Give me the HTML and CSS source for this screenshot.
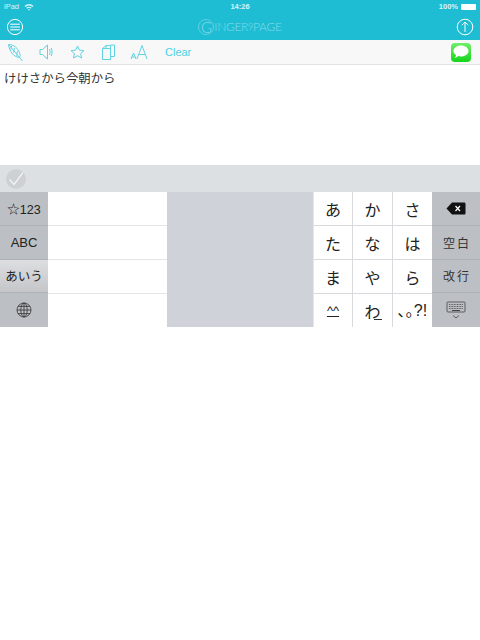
FILE: index.html
```html
<!DOCTYPE html>
<html lang="ja">

	<head>
		<meta charset="UTF-8">
		<title>Ginger Page</title>
		<link rel="stylesheet" href="styles.css">
	</head>

	<body>
		<header class="top">
			<div class="status">
				<span class="carrier">iPad
					<svg class="wifi" width="10" height="8" viewBox="0 0 10 8"><path d="M0.5 3A6.2 6.2 0 0 1 9.5 3L8.5 4A4.8 4.8 0 0 0 1.5 4ZM2.3 4.8A3.7 3.7 0 0 1 7.7 4.8L6.7 5.8A2.3 2.3 0 0 0 3.3 5.8ZM4 6.6A1.4 1.4 0 0 1 6 6.6L5 7.8Z" fill="#d4f3f8"/></svg>
				</span>
				<span class="clock">14:26</span>
				<span class="power">100%<i class="battery"></i></span>
			</div>
			<div class="nav">
				<svg width="18" height="18" viewBox="0 0 18 18" fill="none" stroke="#fff"><circle cx="9" cy="9" r="7.6"/><path d="M4.2 6.2H13.8M4.2 9H13.8M4.2 11.8H13.8"/></svg>
				<div class="logo">
					<span class="logo-g">G</span><span>INGER</span><span class="logo-small">9</span><span>PAGE</span>
				</div>
				<svg width="18" height="18" viewBox="0 0 18 18" fill="none" stroke="#fff"><circle cx="9" cy="9" r="7.8"/><path d="M9 14V4M5.8 7.2L9 4L12.2 7.2"/></svg>
			</div>
		</header>

		<div class="tools">
			<svg class="tool" width="16" height="19" viewBox="0 0 16 19"><path d="M1 1.5C6 1.5 11 5 12.5 11.5C12.8 13 12.5 14 11.5 14.3C6.5 14 2 9 1 1.5ZM1.5 2L15 18M4 3L3.5 6.5M7 5L6 9.5M10 8L9 12.5"/></svg>
			<svg class="tool" width="14" height="16" viewBox="0 0 14 16"><path d="M0.5 5.5V10.5H3L8 15V1L3 5.5ZM10 5C10.8 7 10.8 9 10 11M11.8 4C12.8 6.5 12.8 9.5 11.8 12"/></svg>
			<svg class="tool" width="15" height="14" viewBox="0 0 15 14"><path d="M7.5 1L9.4 5.1L14 5.6L10.6 8.6L11.6 13L7.5 10.7L3.4 13L4.4 8.6L1 5.6L5.6 5.1Z"/></svg>
			<svg class="tool" width="13" height="16" viewBox="0 0 13 16"><path d="M0.5 4.5L4 1.5V4.5ZM0.5 4.5V15.5H8.5V4.5H4M4 1.5H8.5V4.5M8.5 1H12.5V12.5H8.5"/></svg>
			<svg class="tool" width="18" height="15" viewBox="0 0 18 15"><path d="M0.5 14L3 8L5.5 14M1.3 12H4.7M6.5 14L11.5 0.5L16.5 14M8.2 9.5H14.8"/></svg>
			<span class="clear">Clear</span>
			<span class="msg">
				<svg width="16" height="14" viewBox="0 0 16 14"><path d="M8 0.5C12.1 0.5 15.5 2.9 15.5 6C15.5 9.1 12.1 11.5 8 11.5C7 11.5 6 11.4 5.2 11.1C4.2 12.2 2.8 12.9 1.5 13C2.3 12.2 2.9 11.1 3 9.9C1.4 8.9 0.5 7.5 0.5 6C0.5 2.9 3.9 0.5 8 0.5Z" fill="#fff"/></svg>
			</span>
		</div>

		<div class="note">けけさから今朝から</div>

		<div class="suggest">
			<span class="done">
				<svg width="20" height="20" viewBox="0 0 20 20" fill="none" stroke="#fff" stroke-width="1.1"><path d="M3.5 10.5L8 15.5L17 3.5"/></svg>
			</span>
		</div>

		<div class="keyboard">
			<div class="side left">
				<div class="key">☆123</div>
				<div class="key abc">ABC</div>
				<div class="key kana">あいう</div>
				<div class="key">
					<svg width="16" height="16" viewBox="0 0 16 16" fill="none" stroke="#333" stroke-width="0.8"><circle cx="8" cy="8" r="7"/><ellipse cx="8" cy="8" rx="3.2" ry="7"/><path d="M8 1V15M1 8H15M2 4.4H14M2 11.6H14"/></svg>
				</div>
			</div>
			<div class="candidates">
				<div></div><div></div><div></div><div></div>
			</div>
			<div class="gap"></div>
			<div class="keys">
				<div>あ</div><div>か</div><div>さ</div>
				<div>た</div><div>な</div><div>は</div>
				<div>ま</div><div>や</div><div>ら</div>
				<div class="face">^^</div><div class="wa">わ</div><div class="punct">､｡?!</div>
			</div>
			<div class="side right">
				<div class="key">
					<svg width="20" height="13" viewBox="0 0 20 13"><path d="M6 0.5H18C19 0.5 19.5 1 19.5 2V11C19.5 12 19 12.5 18 12.5H6L0.5 6.5Z" fill="#111"/><path d="M9.5 4L14 9M14 4L9.5 9" stroke="#fff" stroke-width="1.2"/></svg>
				</div>
				<div class="key word">空白</div>
				<div class="key word">改行</div>
				<div class="key">
					<svg width="20" height="19" viewBox="0 0 20 19" fill="none" stroke="#444" stroke-width="0.8"><rect x="1" y="1" width="18" height="10" rx="1"/><path d="M3 3.5H17M3 5.5H17M3 7.5H17" stroke-dasharray="1 0.6"/><path d="M6 9.5H14" stroke-width="1"/><path d="M7 14.5L10 17L13 14.5"/></svg>
				</div>
			</div>
		</div>
	</body>

</html>
```

FILE: styles.css
```css
* {
	margin: 0;
	padding: 0;
	box-sizing: border-box;
}

body {
	background: #fff;
	font-family: "Liberation Sans", "Noto Sans CJK JP", sans-serif;
	color: #222;
}

.top {
	height: 40px;
	background: #1fbdd4;
	color: #fff;
}

.status {
	height: 13px;
	padding: 1px 4px 0 4px;
	display: grid;
	grid-template-columns: 1fr auto 1fr;
	align-items: center;
	font-size: 7.5px;
	line-height: 12px;
	color: #d9f4f8;
}

.carrier {
	display: flex;
	align-items: center;
	gap: 5px;
}

.clock {
	font-weight: bold;
}

.power {
	display: flex;
	justify-content: flex-end;
	align-items: center;
	gap: 3px;
	font-weight: bold;
}

.battery {
	width: 15px;
	height: 6px;
	background: #fff;
	border-radius: 1px;
}

.nav {
	height: 27px;
	padding: 0 6px;
	display: flex;
	justify-content: space-between;
	align-items: center;
}

.logo {
	display: flex;
	align-items: center;
	height: 20px;
	font-family: Lato, "Liberation Sans", sans-serif;
	font-weight: 300;
	font-size: 12px;
	color: #83dbe8;
	letter-spacing: -0.3px;
}

.logo-g {
	width: 16px;
	height: 16px;
	border: 1px solid #5fcfe0;
	border-radius: 50%;
	display: flex;
	align-items: center;
	justify-content: center;
	font-size: 15px;
}

.logo-small {
	font-size: 9px;
}

.tools {
	height: 25px;
	background: #f8f8f8;
	border-bottom: 1px solid #e3e3e3;
	display: flex;
	align-items: center;
	padding-right: 9px;
}

.tool {
	width: 31px;
	fill: none;
	stroke: #5fd3e4;
	stroke-width: 1;
}

.clear {
	font-size: 11px;
	color: #4cd0e2;
	margin-left: 10px;
}

.msg {
	margin-left: auto;
	width: 20px;
	height: 19px;
	border-radius: 4px;
	background: linear-gradient(#6fee6a, #14d51c);
	display: flex;
	align-items: center;
	justify-content: center;
}

.note {
	height: 100px;
	padding: 5px 4px 0;
	font-size: 12.4px;
	line-height: 18px;
	color: #333;
}

.suggest {
	height: 27px;
	background: #dde0e3;
	display: flex;
	align-items: center;
	padding-left: 6px;
}

.done {
	width: 20px;
	height: 20px;
	border-radius: 50%;
	background: #cdd0d4;
}

.keyboard {
	height: 135px;
	display: flex;
	background: #cfd2d8;
}

.side {
	width: 48px;
	display: grid;
	grid-template-rows: repeat(4, 1fr);
	background: #bcbfc3;
}

.key {
	display: flex;
	align-items: center;
	justify-content: center;
	font-size: 12.5px;
	border-bottom: 1px solid #aeb1b5;
}

.key:last-child {
	border-bottom: 0;
}

.kana {
	background: linear-gradient(#dcdee0, #c4c6c9);
}

.abc {
	font-size: 13px;
}

.word {
	font-size: 12px;
	letter-spacing: 2px;
	padding-left: 2px;
	color: #333;
}

.candidates {
	width: 119px;
	display: grid;
	grid-template-rows: repeat(4, 1fr);
	row-gap: 1px;
	background: #e4e5e8;
}

.candidates div {
	background: #fff;
}

.gap {
	width: 146px;
}

.keys {
	width: 119px;
	display: grid;
	grid-template-columns: 38px 39px 39px;
	grid-template-rows: repeat(4, 1fr);
	gap: 1px;
	background: #d8dade;
	border-left: 1px solid #e4e5e8;
}

.keys div {
	background: #fff;
	display: flex;
	align-items: center;
	justify-content: center;
	font-size: 16px;
	color: #222;
}

.keys .face {
	font-size: 13px;
	text-decoration: underline;
}

.keys .wa::after {
	content: "";
	width: 8px;
	margin: 18px -1px 0 -7px;
	border-bottom: 1px solid #333;
}

.keys .punct {
	font-size: 16px;
	white-space: nowrap;
	padding-bottom: 3px;
}
```
